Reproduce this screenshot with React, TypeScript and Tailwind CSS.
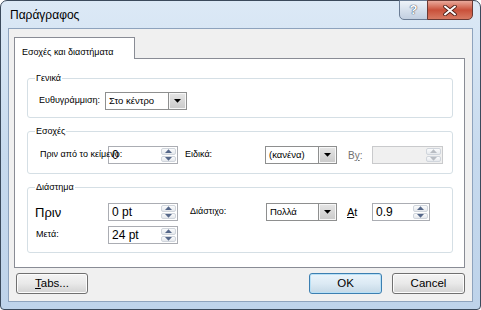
import React from "react";

const FONT = "font-['Liberation_Sans','Noto_Sans',sans-serif]";

function Arrow({ up, color = "#4d6185" }: { up?: boolean; color?: string }) {
  return (
    <svg width="7" height="4" viewBox="0 0 7 4">
      <path d={up ? "M0 4L3.5 0.3L7 4Z" : "M0 0L3.5 3.7L7 0Z"} fill={color} />
    </svg>
  );
}

function Spin({ value, w, disabled }: { value?: string; w: string; disabled?: boolean }) {
  return (
    <div
      className={`flex h-[18px] shrink-0 border ${w} ${
        disabled ? "border-[#c9cacc] bg-[#f0f0f0]" : "border-[#abadb3] bg-white"
      }`}
    >
      <div className="flex flex-1 items-center pl-[3px] text-[12px] leading-none">{value}</div>
      <div className="flex w-[16px] flex-col gap-px py-px pr-px">
        <div className="flex flex-1 items-center justify-center rounded-[2px] border border-[#d0d5dc] bg-gradient-to-b from-[#fafbfc] to-[#e6e9ed]">
          <Arrow up color={disabled ? "#b8bcc2" : "#56688a"} />
        </div>
        <div className="flex flex-1 items-center justify-center rounded-[2px] border border-[#d0d5dc] bg-gradient-to-b from-[#fafbfc] to-[#e6e9ed]">
          <Arrow color={disabled ? "#b8bcc2" : "#56688a"} />
        </div>
      </div>
    </div>
  );
}

function Drop({ value, w }: { value: string; w: string }) {
  return (
    <div className={`flex h-[18px] shrink-0 border border-[#8e8f8f] bg-white ${w}`}>
      <div className="flex flex-1 items-center pl-[3px] text-[9.5px] leading-none">{value}</div>
      <div className="flex w-[18px] items-center justify-center border-l border-[#8e8f8f] bg-gradient-to-b from-[#e6e6e6] to-[#c9c9c9] shadow-[inset_0_0_0_1px_#f7f7f7]">
        <Arrow color="#000" />
      </div>
    </div>
  );
}

function Group({ title, h, children }: { title: string; h: string; children: React.ReactNode }) {
  return (
    <fieldset className={`rounded-[3px] border border-[#d5dfe5] pl-[7px] ${h}`}>
      <legend className="px-px text-[9px] leading-[12px]">{title}</legend>
      {children}
    </fieldset>
  );
}

function Button({ children, def, w }: { children: React.ReactNode; def?: boolean; w: string }) {
  return (
    <div
      className={`flex h-[21px] items-center justify-center rounded-[3px] border text-[11.5px] ${w} ${
        def
          ? "border-[#3c7fb1] bg-gradient-to-b from-[#eaf4fb] via-[#dceaf4] to-[#c4d8e6] shadow-[inset_0_0_0_1px_#b8e0f6]"
          : "border-[#707070] bg-gradient-to-b from-[#f4f4f4] via-[#e9e9e9] to-[#d2d2d2] shadow-[inset_0_0_0_1px_#fcfcfc]"
      }`}
    >
      {children}
    </div>
  );
}

export default function App() {
  return (
    <div
      className={`relative flex h-[310px] w-[481px] flex-col rounded-t-[7px] rounded-b-[4px] border border-[#3b4a5c] bg-gradient-to-b from-[#dce9f6] via-[#c7daee] to-[#bed3ea] text-black ${FONT}`}
    >
      {/* title bar */}
      <div className="flex h-[27px] items-center pl-[9px] text-[12px]">Παράγραφος</div>
      <div className="absolute right-[7px] top-[-1px] flex">
        <div className="flex h-[20px] w-[29px] items-center justify-center rounded-bl-[5px] border border-[#6b7d95] bg-gradient-to-b from-[#eef3f9] via-[#d6e0ec] to-[#c2cfe0] text-[13px] font-bold text-white [text-shadow:0_0_1px_#2b3a4f,0_0_1px_#2b3a4f]">
          ?
        </div>
        <div className="-ml-px flex h-[20px] w-[46px] items-center justify-center rounded-br-[5px] border border-[#6b3a34] bg-gradient-to-b from-[#e9a99b] via-[#c9503a] to-[#d77a63]">
          <svg width="14" height="11" viewBox="0 0 14 11">
            <path d="M2 1.5L12 9.5M12 1.5L2 9.5" stroke="#4b1d16" strokeWidth="3.6" strokeLinecap="round" />
            <path d="M2 1.5L12 9.5M12 1.5L2 9.5" stroke="#fff" strokeWidth="2" strokeLinecap="round" />
          </svg>
        </div>
      </div>

      {/* client area */}
      <div className="mx-[7px] mb-[7px] flex flex-1 flex-col border border-[#8ea3bd] bg-[#f0f0f0] pl-[5px] pr-[7px] pt-[8px]">
        <div className="relative z-10 flex h-[22px] w-[121px] items-start border border-b-0 border-[#898c95] bg-white pl-[7px] pt-[8px] text-[9px] leading-[12px]">
          Εσοχές και διαστήματα
        </div>
        <div className="-mt-px flex h-[210px] flex-col gap-[7px] border border-[#898c95] bg-white pl-[12px] pr-[11px] pt-[13px]">
          <Group title="Γενικά" h="h-[46px]">
            <div className="mt-[8px] flex items-center text-[9px]">
              <span className="ml-[4px] w-[66px] whitespace-nowrap">Ευθυγράμμιση:</span>
              <Drop value="Στο κέντρο" w="w-[82px]" />
            </div>
          </Group>

          <Group title="Εσοχές" h="h-[49px]">
            <div className="mt-[9px] flex items-center text-[9px]">
              <span className="relative z-10 ml-[5px] w-[68px] shrink-0 whitespace-nowrap">Πριν από το κείμενο:</span>
              <Spin value="0" w="w-[70px]" />
              <span className="ml-[7px] w-[80px] shrink-0">Ειδικά:</span>
              <Drop value="(κανένα)" w="w-[72px]" />
              <span className="ml-[11px] w-[24px] shrink-0 text-[10px] text-[#707070]">
                B<span className="underline">y</span>:
              </span>
              <Spin w="w-[71px]" disabled />
            </div>
          </Group>

          <Group title="Διάστημα" h="h-[72px]">
            <div className="mt-[10px] flex flex-col gap-[5px] text-[9px]">
              <div className="flex items-center">
                <span className="w-[73px] shrink-0 text-[13px] leading-none">Πριν</span>
                <Spin value="0 pt" w="w-[70px]" />
                <span className="ml-[12px] w-[76px] shrink-0">Διάστιχο:</span>
                <Drop value="Πολλά" w="w-[71px]" />
                <span className="ml-[10px] w-[25px] shrink-0 text-[11px]">
                  <span className="underline">A</span>t
                </span>
                <Spin value="0.9" w="w-[58px]" />
              </div>
              <div className="flex items-center">
                <span className="ml-px w-[72px] shrink-0">Μετά:</span>
                <Spin value="24 pt" w="w-[70px]" />
              </div>
            </div>
          </Group>
        </div>

        <div className="mt-[5px] flex items-center">
          <div className="ml-[2px]">
            <Button w="w-[72px]">
              <span>
                <span className="underline">T</span>abs...
              </span>
            </Button>
          </div>
          <div className="ml-auto flex gap-[10px]">
            <Button def w="w-[73px]">
              OK
            </Button>
            <Button w="w-[73px]">Cancel</Button>
          </div>
        </div>
      </div>
    </div>
  );
}
